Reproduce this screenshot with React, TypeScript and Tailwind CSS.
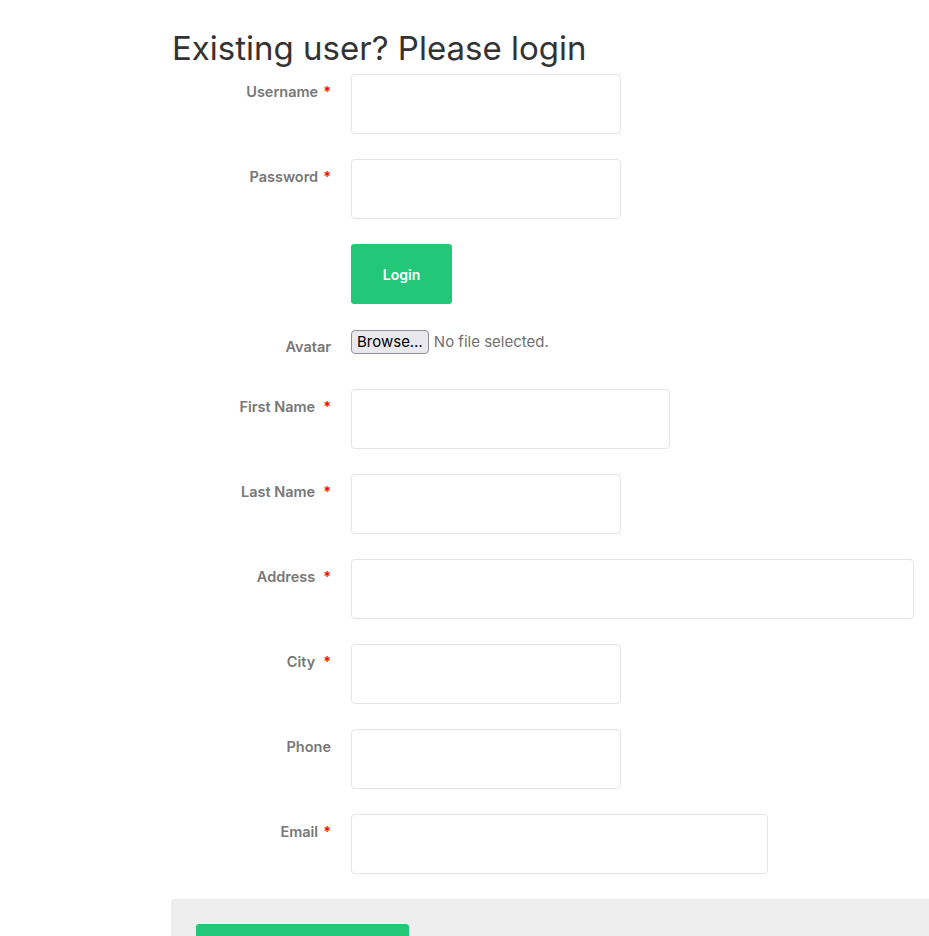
const fields: { label: string; required: boolean; width: string; gap?: boolean }[] = [
  { label: "First Name", required: true, width: "w-[319px]", gap: true },
  { label: "Last Name", required: true, width: "w-[270px]", gap: true },
  { label: "Address", required: true, width: "w-[563px]", gap: true },
  { label: "City", required: true, width: "w-[270px]", gap: true },
  { label: "Phone", required: false, width: "w-[270px]" },
  { label: "Email", required: true, width: "w-[417px]" },
];

function Label({ text, required, wide }: { text: string; required?: boolean; wide?: boolean }) {
  return (
    <label className="pt-[8px] text-right text-[14.5px] leading-[20px] font-semibold text-[#777]">
      {text}
      {required && <span className={`${wide ? "ml-[8px]" : "ml-[5px]"} text-[#f00]`}>*</span>}
    </label>
  );
}

function TextBox({ width, type = "text" }: { width: string; type?: string }) {
  return (
    <input
      type={type}
      className={`${width} h-[60px] rounded-[4px] border border-[#e5e5e5] bg-white px-3 outline-none`}
    />
  );
}

export default function App() {
  return (
    <div className="min-h-[936px] bg-white pl-[171px] font-['Inter',sans-serif]">
      <h1 className="pt-[25px] pl-[1px] text-[33px] leading-[46px] font-normal text-[#333]">
        Existing user? Please login
      </h1>

      <form className="mt-[3px] grid grid-cols-[160px_1fr] gap-x-[20px] gap-y-[25px]">
        <Label text="Username" required />
        <TextBox width="w-[270px]" />

        <Label text="Password" required />
        <TextBox width="w-[270px]" type="password" />

        <div />
        <button
          type="button"
          className="h-[60px] w-[101px] rounded-[3px] bg-[#22c777] text-[14px] font-semibold text-white"
        >
          Login
        </button>

        <Label text="Avatar" />
        <div className="flex h-[35px] items-start pt-[1px]">
          <button
            type="button"
            className="h-[24px] rounded-[4px] border border-[#8f8f9d] bg-[#e9e9ed] px-[5px] text-[15px] leading-[20px] text-black"
          >
            Browse…
          </button>
          <span className="ml-[5px] pt-[1px] text-[15px] leading-[22px] text-[#707070]">No file selected.</span>
        </div>

        {fields.map((f) => (
          <div key={f.label} className="contents">
            <Label text={f.label} required={f.required} wide={f.gap} />
            <TextBox width={f.width} />
          </div>
        ))}
      </form>

      <div className="mt-[25px] h-[60px] rounded-tl-[4px] bg-[#eeeeee] pt-[25px] pl-[25px]">
        <div className="h-[40px] w-[213px] rounded-[3px] bg-[#22c777]" />
      </div>
    </div>
  );
}
